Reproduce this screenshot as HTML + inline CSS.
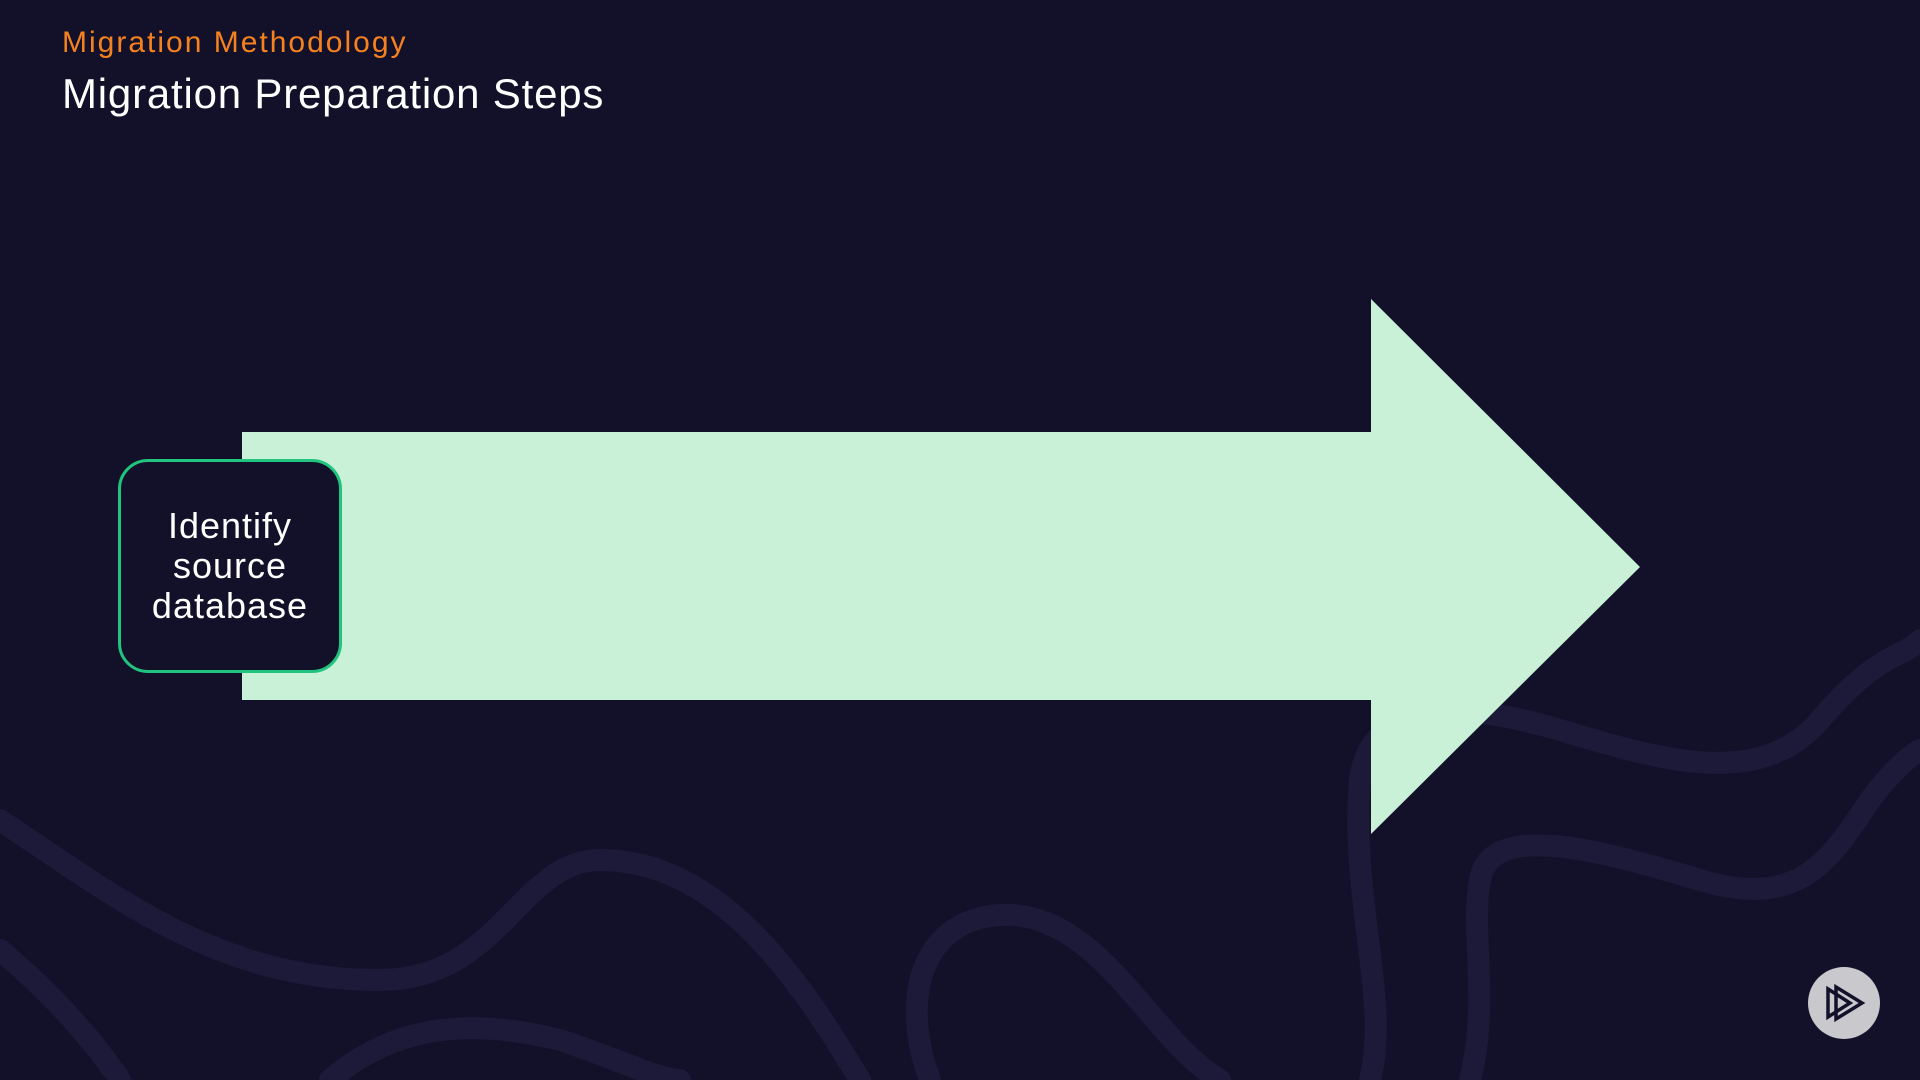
<!DOCTYPE html>
<html><head><style>
html,body{margin:0;padding:0;}
body{width:1920px;height:1080px;background:#13112a;position:relative;overflow:hidden;font-family:"Liberation Sans",sans-serif;}
.sub{position:absolute;left:62px;top:26px;color:#f5821f;font-size:30px;letter-spacing:2px;}
.title{position:absolute;left:62px;top:70px;color:#fff;font-size:42px;letter-spacing:0.8px;}
.box{position:absolute;left:118px;top:459px;width:218px;height:208px;border:3px solid #20c47e;border-radius:30px;background:#13112a;color:#fff;font-size:36px;line-height:40px;letter-spacing:1px;text-align:center;display:flex;align-items:center;justify-content:center;box-sizing:content-box;}
.play{position:absolute;left:1808px;top:967px;width:72px;height:72px;border-radius:50%;background:#c9c9cd;}
</style></head><body>
<svg width="1920" height="1080" style="position:absolute;left:0;top:0">
<g fill="none" stroke="#1c1939" stroke-width="22" stroke-linecap="round">
<path d="M0 820 C120 900 220 980 380 980 C500 980 520 860 600 860 C720 860 800 980 860 1080"/>
<path d="M0 950 C60 1000 100 1050 120 1080"/>
<path d="M330 1080 C400 1020 480 1020 560 1040 C620 1060 660 1080 680 1080"/>
<path d="M930 1080 C900 1000 920 920 1000 915 C1100 910 1150 1040 1220 1080"/>
<path d="M1370 1080 C1390 1000 1350 900 1360 780 C1370 700 1460 700 1560 730 C1660 760 1760 790 1820 720 C1880 650 1900 660 1920 640"/>
<path d="M1470 1080 C1490 1000 1470 930 1480 880 C1490 820 1600 850 1700 880 C1800 910 1830 860 1870 800 C1900 760 1920 750 1920 750"/>
</g>
<polygon points="242,432 1371,432 1371,299 1640,567 1371,834 1371,700 242,700" fill="#c9f1d8"/>
</svg>
<div class="sub">Migration Methodology</div>
<div class="title">Migration Preparation Steps</div>
<div class="box"><div>Identify<br>source<br>database</div></div>
<div class="play"><svg width="72" height="72" viewBox="0 0 72 72"><g fill="none" stroke="#13112a" stroke-width="3.5" stroke-linejoin="miter"><path d="M20 22 L20 50 L42 36 Z"/><path d="M28 20 L28 52 L54 36 Z"/></g></svg></div>
</body></html>
